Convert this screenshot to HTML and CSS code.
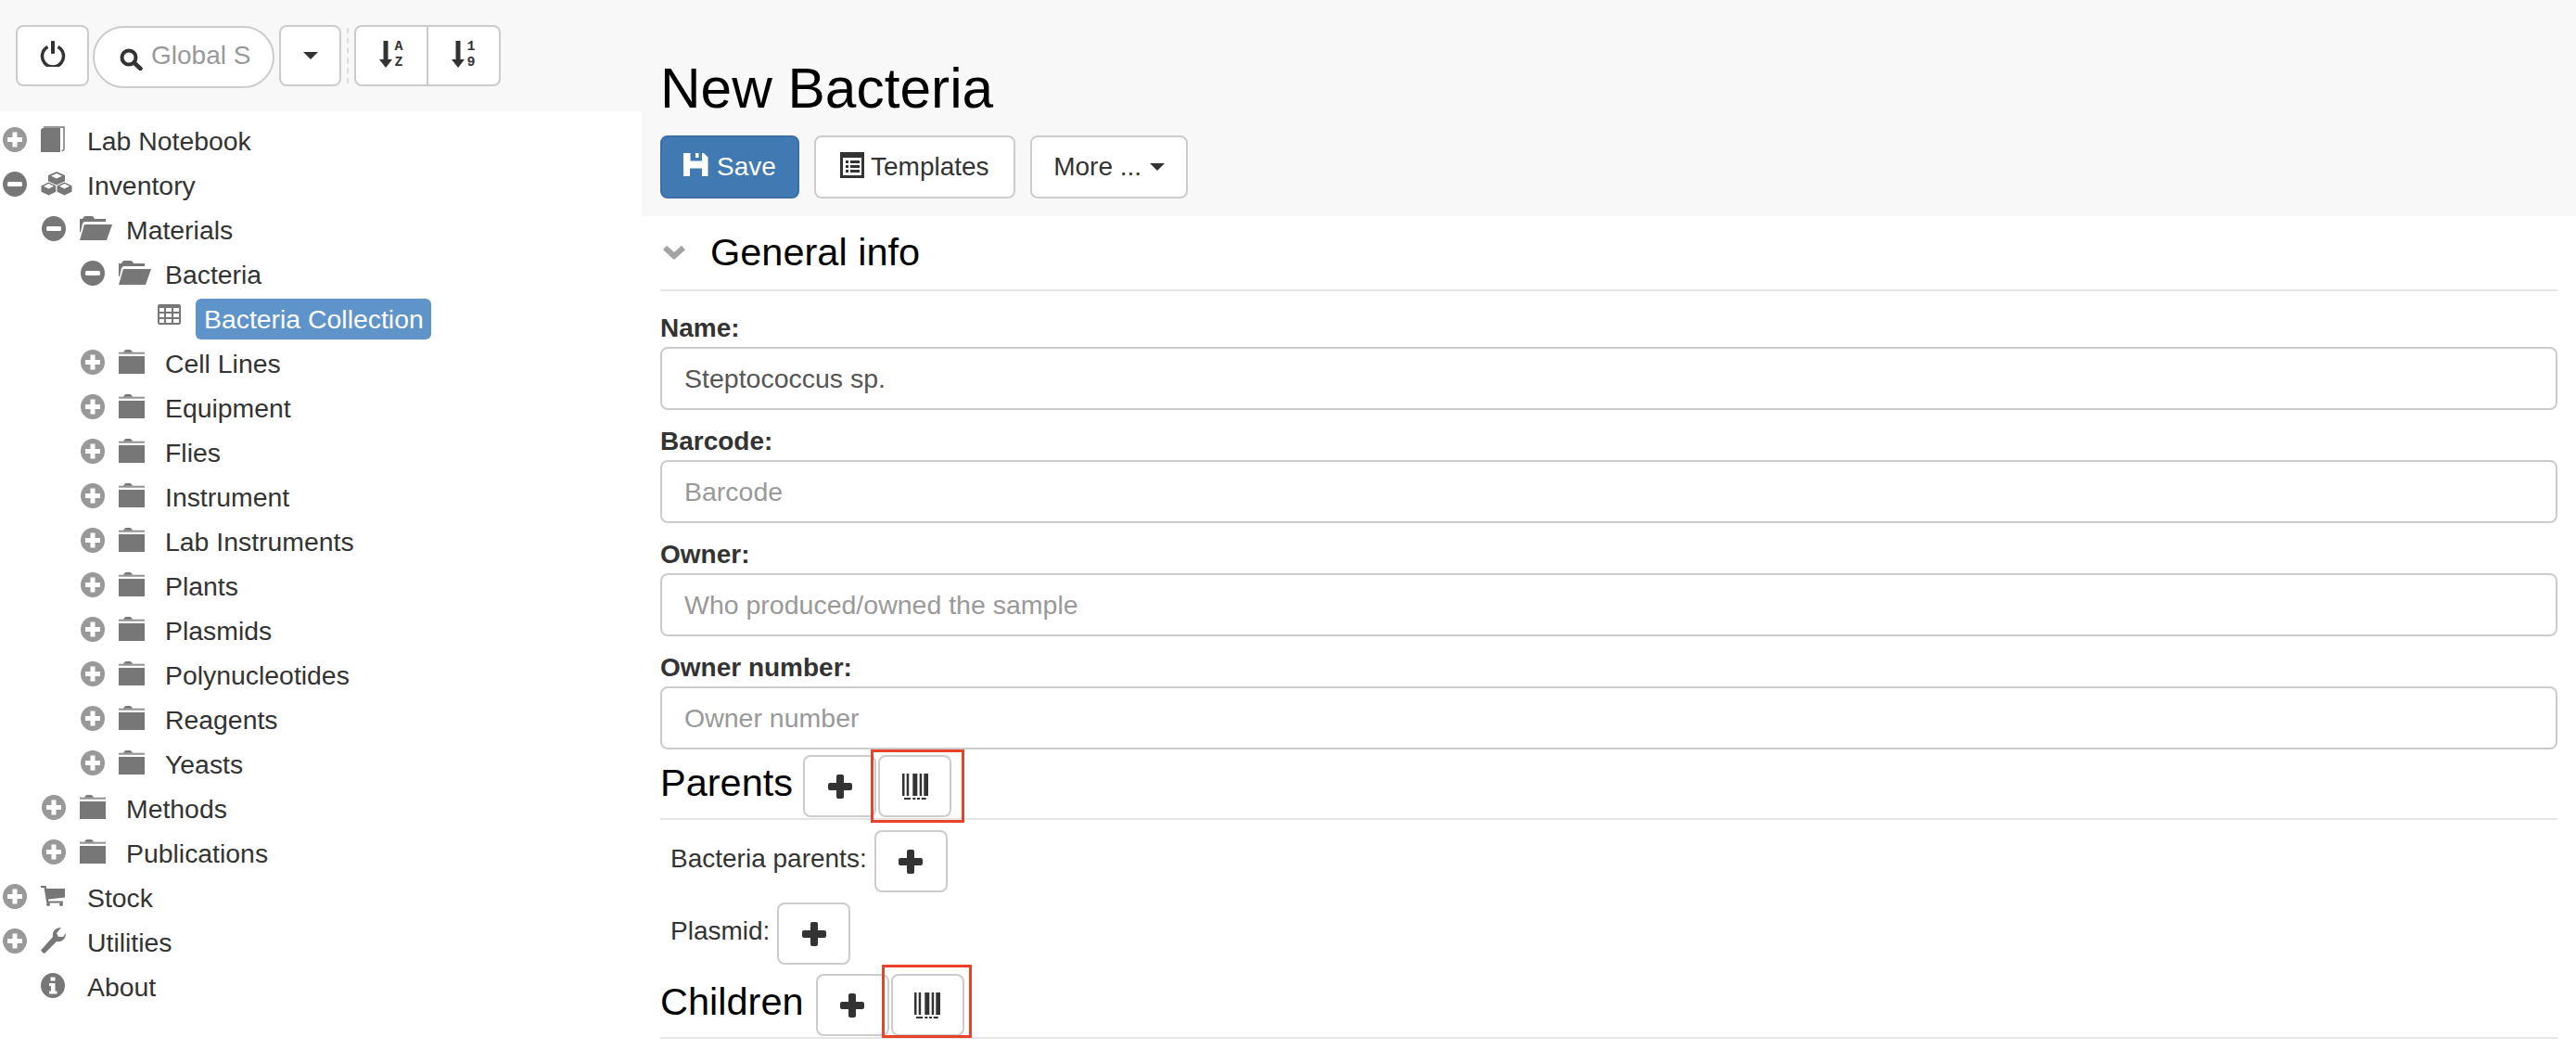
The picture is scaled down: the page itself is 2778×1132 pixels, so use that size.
FILE: index.html
```html
<!DOCTYPE html>
<html lang="en">
<head>
  <meta charset="UTF-8">
  <title>New Bacteria</title>
  <link rel="stylesheet" href="styles.css">
</head>
<body>
  <!-- icon set -->
  <svg class="sprite" xmlns="http://www.w3.org/2000/svg">
    <symbol id="i-plus-sign" viewBox="0 0 26 27">
      <ellipse cx="13" cy="13.5" rx="13" ry="13.5" fill="#999"/>
      <path d="M10.5 5.5h5v5.500h5.500v5h-5.500v5.500h-5v-5.500h-5.500v-5h5.500z" fill="#fff"/>
    </symbol>
    <symbol id="i-minus-sign" viewBox="0 0 26 27">
      <ellipse cx="13" cy="13.500" rx="13" ry="13.500" fill="#777"/>
      <rect x="5" y="11" width="16" height="5" rx="1.500" fill="#fff"/>
    </symbol>
    <symbol id="i-book" viewBox="0 0 26 28">
      <path d="M0 5Q0 2 3 2H21V28H0Z"/>
      <path d="M3 1H25V25L23 27" fill="none" stroke="currentColor" stroke-width="1.500"/>
    </symbol>
    <symbol id="i-cubes" viewBox="0 0 34 27">
      <path d="M17 0L26 4V11L17 15L8 11V4Z"/>
      <path d="M17 2L23 4.700L17 7.500L11 4.700Z" fill="#fff"/>
      <path d="M8.500 11L17 15V22L8.500 26L0 22V15Z" stroke="#fff"/>
      <path d="M8.500 13L14 15.700L8.500 18.400L3 15.700Z" fill="#fff"/>
      <path d="M25.500 11L34 15V22L25.500 26L17 22V15Z" stroke="#fff"/>
      <path d="M25.500 13L31 15.700L25.500 18.400L20 15.700Z" fill="#fff"/>
    </symbol>
    <symbol id="i-folder-close" viewBox="0 0 28 26">
      <path d="M5 2.700Q6 0 8 0H12Q14 0 15 2.700Z"/>
      <rect y="2.700" width="28" height="2" opacity=".8"/>
      <rect y="7" width="28" height="19"/>
    </symbol>
    <symbol id="i-folder-open" viewBox="0 0 35 26">
      <path d="M0 3H3Q4 0 6 0H13Q15 0 16 3H28V6H5L3 8L1 17H0Z"/>
      <path d="M5 9H35L29 26H0Z"/>
    </symbol>
    <symbol id="i-th" viewBox="0 0 25 22">
      <path d="M2 0H23Q25 0 25 2V20Q25 22 23 22H2Q0 22 0 20V2Q0 0 2 0ZM2 4V8H7V4ZM9 4V8H15V4ZM17 4V8H23V4ZM2 10V14H7V10ZM9 10V14H15V10ZM17 10V14H23V10ZM2 16V20H7V16ZM9 16V20H15V16ZM17 16V20H23V16Z" fill-rule="evenodd"/>
    </symbol>
    <symbol id="i-cart" viewBox="0 0 26 22">
      <path d="M0 0H5.500L6.200 3H26V12.500L8 14.500L8.400 16.500H24V18.500H6.300L3.500 2H0Z"/>
      <circle cx="8" cy="20" r="2"/>
      <circle cx="22" cy="20" r="2"/>
    </symbol>
    <symbol id="i-wrench" viewBox="0 0 27 28">
      <path d="M0 24.500L13 10C12 5 15 0 22 0L17 6L19 10L24 10L27 6C27 12 23 16 17 15L4 28Q2 28 0 24.500Z"/>
    </symbol>
    <symbol id="i-info" viewBox="0 0 26 27">
      <ellipse cx="13" cy="13.500" rx="13" ry="13.500"/>
      <path d="M10.500 4.500h5v4h-5zM9 11h6.500v8.500H17.500v3H9v-3h2V14H9z" fill="#fff"/>
    </symbol>
    <symbol id="i-power" viewBox="0 0 28 28">
      <path d="M8.500 6.500A11.500 11.500 0 1 0 19.500 6.500" fill="none" stroke="currentColor" stroke-width="3.500"/>
      <rect x="12" y="0" width="4" height="14" rx="1"/>
    </symbol>
    <symbol id="i-search" viewBox="0 0 25 24">
      <circle cx="10" cy="10" r="7.500" fill="none" stroke="currentColor" stroke-width="4"/>
      <path d="M15.500 15.500L22.500 22" fill="none" stroke="currentColor" stroke-width="4.500" stroke-linecap="round"/>
    </symbol>
    <symbol id="i-caret" viewBox="0 0 16 8">
      <path d="M0 0H16L8 8Z"/>
    </symbol>
    <symbol id="i-arrow" viewBox="0 0 14 29">
      <path d="M4.500 0H9.500V20H14L7 29L0 20H4.500Z"/>
    </symbol>
    <symbol id="i-floppy" viewBox="0 0 27 25">
      <path d="M0 0H7.500V8.500H20V0H22L26.500 4.500V25H0ZM7 16.500V25H20V16.500Z" fill-rule="evenodd"/>
      <rect x="13" y="0" width="3.500" height="5"/>
    </symbol>
    <symbol id="i-list" viewBox="0 0 26 28">
      <path d="M0 0H26V28H0ZM3 6V25H23V6Z" fill-rule="evenodd"/>
      <path d="M6 9h3v3H6zM11 9h10v3H11zM6 14h3v3H6zM11 14h10v3H11zM6 19h3v3H6zM11 19h10v3H11z"/>
    </symbol>
    <symbol id="i-chevron" viewBox="0 0 26 16">
      <path d="M3 3L13 12L23 3" fill="none" stroke="currentColor" stroke-width="6"/>
    </symbol>
    <symbol id="i-plus" viewBox="0 0 26 26">
      <path d="M9 2Q9 0 11 0H15Q17 0 17 2V9H24Q26 9 26 11V15Q26 17 24 17H17V24Q17 26 15 26H11Q9 26 9 24V17H2Q0 17 0 15V11Q0 9 2 9H9Z"/>
    </symbol>
    <symbol id="i-barcode" viewBox="0 0 28 28">
      <path d="M0 0h2.500v24H0zM4.700 0h2.500v24H4.700zM11.300 0h5v24h-5zM18.700 0h2.500v24h-2.500zM23.300 0h4.700v24h-4.700zM2 26h7v2H2zM11.300 26h3v2h-3zM16 26h3v2h-3zM20.700 26h5v2h-5z"/>
    </symbol>
  </svg>

  <div class="page">
    <aside class="sidebar">
      <div class="toolbar">
        <button class="btn btn-power"><svg class="ic ic-power"><use href="#i-power"/></svg></button>
        <div class="search">
          <svg class="ic ic-search"><use href="#i-search"/></svg>
          <span class="search-hint">Global S</span>
        </div>
        <button class="btn btn-drop"><svg class="ic ic-caret"><use href="#i-caret"/></svg></button>
        <span class="tool-sep"></span>
        <div class="btn-group">
          <button class="btn btn-sort">
            <svg class="ic ic-arrow"><use href="#i-arrow"/></svg>
            <span class="sort-chars"><span>A</span><span>Z</span></span>
          </button>
          <button class="btn btn-sort">
            <svg class="ic ic-arrow"><use href="#i-arrow"/></svg>
            <span class="sort-chars"><span>1</span><span>9</span></span>
          </button>
        </div>
      </div>

      <ul class="tree">
        <li class="node lvl-0"><svg class="exp"><use href="#i-plus-sign"/></svg><span class="node-ico"><svg class="ic ic-book"><use href="#i-book"/></svg></span><span>Lab Notebook</span></li>
        <li class="node lvl-0"><svg class="exp"><use href="#i-minus-sign"/></svg><span class="node-ico"><svg class="ic ic-cubes"><use href="#i-cubes"/></svg></span><span>Inventory</span></li>
        <li class="node lvl-1"><svg class="exp"><use href="#i-minus-sign"/></svg><span class="node-ico"><svg class="ic ic-open"><use href="#i-folder-open"/></svg></span><span>Materials</span></li>
        <li class="node lvl-2"><svg class="exp"><use href="#i-minus-sign"/></svg><span class="node-ico"><svg class="ic ic-open"><use href="#i-folder-open"/></svg></span><span>Bacteria</span></li>
        <li class="node lvl-3"><span class="exp"></span><span class="node-ico"><svg class="ic ic-th"><use href="#i-th"/></svg></span><span class="selected">Bacteria Collection</span></li>
        <li class="node lvl-2"><svg class="exp"><use href="#i-plus-sign"/></svg><span class="node-ico"><svg class="ic ic-folder"><use href="#i-folder-close"/></svg></span><span>Cell Lines</span></li>
        <li class="node lvl-2"><svg class="exp"><use href="#i-plus-sign"/></svg><span class="node-ico"><svg class="ic ic-folder"><use href="#i-folder-close"/></svg></span><span>Equipment</span></li>
        <li class="node lvl-2"><svg class="exp"><use href="#i-plus-sign"/></svg><span class="node-ico"><svg class="ic ic-folder"><use href="#i-folder-close"/></svg></span><span>Flies</span></li>
        <li class="node lvl-2"><svg class="exp"><use href="#i-plus-sign"/></svg><span class="node-ico"><svg class="ic ic-folder"><use href="#i-folder-close"/></svg></span><span>Instrument</span></li>
        <li class="node lvl-2"><svg class="exp"><use href="#i-plus-sign"/></svg><span class="node-ico"><svg class="ic ic-folder"><use href="#i-folder-close"/></svg></span><span>Lab Instruments</span></li>
        <li class="node lvl-2"><svg class="exp"><use href="#i-plus-sign"/></svg><span class="node-ico"><svg class="ic ic-folder"><use href="#i-folder-close"/></svg></span><span>Plants</span></li>
        <li class="node lvl-2"><svg class="exp"><use href="#i-plus-sign"/></svg><span class="node-ico"><svg class="ic ic-folder"><use href="#i-folder-close"/></svg></span><span>Plasmids</span></li>
        <li class="node lvl-2"><svg class="exp"><use href="#i-plus-sign"/></svg><span class="node-ico"><svg class="ic ic-folder"><use href="#i-folder-close"/></svg></span><span>Polynucleotides</span></li>
        <li class="node lvl-2"><svg class="exp"><use href="#i-plus-sign"/></svg><span class="node-ico"><svg class="ic ic-folder"><use href="#i-folder-close"/></svg></span><span>Reagents</span></li>
        <li class="node lvl-2"><svg class="exp"><use href="#i-plus-sign"/></svg><span class="node-ico"><svg class="ic ic-folder"><use href="#i-folder-close"/></svg></span><span>Yeasts</span></li>
        <li class="node lvl-1"><svg class="exp"><use href="#i-plus-sign"/></svg><span class="node-ico"><svg class="ic ic-folder"><use href="#i-folder-close"/></svg></span><span>Methods</span></li>
        <li class="node lvl-1"><svg class="exp"><use href="#i-plus-sign"/></svg><span class="node-ico"><svg class="ic ic-folder"><use href="#i-folder-close"/></svg></span><span>Publications</span></li>
        <li class="node lvl-0"><svg class="exp"><use href="#i-plus-sign"/></svg><span class="node-ico"><svg class="ic ic-cart"><use href="#i-cart"/></svg></span><span>Stock</span></li>
        <li class="node lvl-0"><svg class="exp"><use href="#i-plus-sign"/></svg><span class="node-ico"><svg class="ic ic-wrench"><use href="#i-wrench"/></svg></span><span>Utilities</span></li>
        <li class="node lvl-0"><span class="exp"></span><span class="node-ico"><svg class="ic ic-info"><use href="#i-info"/></svg></span><span>About</span></li>
      </ul>
    </aside>

    <main class="main">
      <header class="main-head">
        <h2>New Bacteria</h2>
        <div class="actions">
          <button class="btn btn-save"><svg class="ic ic-floppy"><use href="#i-floppy"/></svg>Save</button>
          <button class="btn btn-text"><svg class="ic ic-list"><use href="#i-list"/></svg>Templates</button>
          <button class="btn btn-more">More ...<svg class="ic ic-caret ic-caret-more"><use href="#i-caret"/></svg></button>
        </div>
      </header>

      <div class="content">
        <div class="legend">
          <svg class="ic ic-chevron"><use href="#i-chevron"/></svg>
          <h3>General info</h3>
        </div>

        <div class="field"><label for="f-name">Name:</label><input id="f-name" type="text" value="Steptococcus sp."></div>
        <div class="field"><label for="f-barcode">Barcode:</label><input id="f-barcode" type="text" placeholder="Barcode"></div>
        <div class="field"><label for="f-owner">Owner:</label><input id="f-owner" type="text" placeholder="Who produced/owned the sample"></div>
        <div class="field"><label for="f-number">Owner number:</label><input id="f-number" type="text" placeholder="Owner number"></div>

        <div class="rel-head rel-parents">
          <h3>Parents</h3>
          <button class="btn btn-square"><svg class="ic ic-plus"><use href="#i-plus"/></svg></button>
          <button class="btn btn-square mark mark-parents"><svg class="ic ic-barcode"><use href="#i-barcode"/></svg></button>
        </div>
        <div class="rel-row">
          <span class="rel-label">Bacteria parents:</span>
          <button class="btn btn-square"><svg class="ic ic-plus"><use href="#i-plus"/></svg></button>
        </div>
        <div class="rel-row">
          <span class="rel-label">Plasmid:</span>
          <button class="btn btn-square"><svg class="ic ic-plus"><use href="#i-plus"/></svg></button>
        </div>
        <div class="rel-head rel-children">
          <h3>Children</h3>
          <button class="btn btn-square"><svg class="ic ic-plus"><use href="#i-plus"/></svg></button>
          <button class="btn btn-square mark mark-children"><svg class="ic ic-barcode"><use href="#i-barcode"/></svg></button>
        </div>
      </div>
    </main>
  </div>
</body>
</html>
```

FILE: styles.css
```css
* {
  box-sizing: border-box;
}

body {
  margin: 0;
  background: #fff;
  font-family: "Liberation Sans", Arial, sans-serif;
  font-size: 28px;
  color: #333;
}

.sprite {
  display: none;
}

.page {
  display: flex;
  align-items: flex-start;
}

.ic {
  display: block;
  flex: none;
  fill: currentColor;
}

/* buttons */
.btn {
  display: flex;
  align-items: center;
  justify-content: center;
  height: 68px;
  padding: 0;
  background: #fff;
  border: 2px solid #ccc;
  border-radius: 8px;
  font-family: inherit;
  font-size: 28px;
  color: #333;
}

.btn-text {
  padding: 0 26px;
}

.btn-more {
  width: 170px;
  padding: 0 0 0 1px;
}

.btn-save {
  width: 150px;
  background: #4179b3;
  border-color: #3a6fa6;
  color: #fff;
}

.btn-square {
  width: 79px;
  height: 67px;
}

/* left column */
.sidebar {
  flex: none;
  width: 692px;
}

.toolbar {
  display: flex;
  align-items: flex-start;
  height: 120px;
  padding: 27px 0 0 17px;
  background: #f8f8f8;
}

.toolbar .btn {
  height: 66px;
}

.btn-power {
  width: 79px;
}

.ic-power {
  width: 28px;
  height: 28px;
  margin-top: -4px;
}

.search {
  display: flex;
  align-items: center;
  width: 196px;
  height: 67px;
  margin: 1px 0 0 4px;
  padding: 0 0 4px 27px;
  background: #fff;
  border: 2px solid #ccc;
  border-radius: 34px;
}

.ic-search {
  width: 25px;
  height: 24px;
  margin: 8px 9px 0 0;
}

.search-hint {
  color: #999;
}

.btn-drop {
  width: 67px;
  margin-left: 5px;
}

.ic-caret {
  width: 16px;
  height: 8px;
}

.tool-sep {
  width: 2px;
  height: 60px;
  margin: 3px 6px 0;
  border-left: 2px dashed #ddd;
}

.btn-group {
  display: flex;
}

.btn-sort {
  width: 80px;
  margin-left: -2px;
  border-radius: 0;
}

.btn-sort:first-child {
  margin-left: 0;
  border-radius: 8px 0 0 8px;
}

.btn-sort:last-child {
  border-radius: 0 8px 8px 0;
}

.ic-arrow {
  width: 14px;
  height: 29px;
  margin-top: -4px;
}

.sort-chars {
  display: flex;
  flex-direction: column;
  margin: -3px 0 0 2px;
  font-family: "Liberation Mono", monospace;
  font-size: 15px;
  font-weight: 700;
  line-height: 17px;
}

.tree {
  margin: 0;
  padding: 8px 0 0;
  list-style: none;
  font-size: 28.4px;
}

.node {
  display: flex;
  align-items: center;
  height: 48px;
}

.lvl-0 {
  padding-left: 3px;
}

.lvl-1 {
  padding-left: 45px;
}

.lvl-2 {
  padding-left: 87px;
}

.lvl-3 {
  padding-left: 129px;
}

.exp {
  flex: none;
  width: 26px;
  height: 27px;
  margin: 0 15px 4px 0;
}

.node-ico {
  flex: none;
  width: 50px;
  margin-bottom: 4px;
  color: #777;
}

.ic-book { width: 26px; height: 28px; }
.ic-cubes { width: 34px; height: 27px; }
.ic-folder { width: 28px; height: 26px; }
.ic-open { width: 35px; height: 26px; }
.ic-th { width: 25px; height: 22px; margin-bottom: 6px; }
.ic-cart { width: 26px; height: 22px; }
.ic-wrench { width: 27px; height: 28px; }
.ic-info { width: 26px; height: 27px; }

.selected {
  margin-left: -9px;
  padding: 0 8px 0 9px;
  line-height: 44px;
  background: #5e94c9;
  border-radius: 6px;
  color: #fff;
}

/* main column */
.main {
  flex: 1;
  min-width: 0;
}

.main-head {
  height: 233px;
  padding: 62px 0 0 20px;
  background: #f8f8f8;
}

h2 {
  margin: 0;
  font-size: 60.400px;
  font-weight: 400;
  line-height: 66px;
  color: #000;
}

.actions {
  display: flex;
  gap: 16px;
  margin-top: 18px;
}

.ic-floppy {
  width: 27px;
  height: 25px;
  margin: -6px 9px 0 0;
}

.ic-list {
  width: 26px;
  height: 28px;
  margin: -4px 7px 0 0;
}

.ic-caret-more {
  margin-left: 9px;
}

.content {
  padding: 0 20px;
}

h3 {
  margin: 0;
  font-size: 41.500px;
  font-weight: 400;
  line-height: 46px;
  color: #000;
}

.legend {
  display: flex;
  align-items: center;
  padding: 16px 0 17px;
  border-bottom: 2px solid #e5e5e5;
}

.ic-chevron {
  width: 26px;
  height: 16px;
  margin: 0 26px 0 2px;
  color: #a3a3a3;
}

.field {
  margin-top: 14px;
}

.legend + .field {
  margin-top: 20px;
}

.field label {
  display: block;
  font-weight: 700;
  line-height: 40px;
}

.field input {
  display: block;
  width: 100%;
  height: 68px;
  padding: 0 24px;
  border: 2px solid #ccc;
  border-radius: 8px;
  font-family: inherit;
  font-size: 28.500px;
  color: #555;
}

.field input::placeholder {
  color: #999;
}

.rel-head {
  display: flex;
  align-items: center;
  padding-bottom: 1px;
  border-bottom: 2px solid #e5e5e5;
}

.rel-head h3 {
  margin: 0 11px 8px 0;
}

.rel-head .btn + .btn {
  margin-left: 2px;
}

.rel-parents {
  margin-top: 6px;
}

.rel-children {
  margin-top: 10px;
}

.rel-children h3 {
  margin-right: 13px;
}

.rel-row {
  display: flex;
  align-items: center;
  margin-top: 11px;
  padding-left: 11px;
}

.rel-label {
  margin: 0 8px 6px 0;
  line-height: 40px;
}

/* red marks over the barcode buttons */
.mark {
  position: relative;
}

.mark::after {
  content: "";
  position: absolute;
  border: 3px solid #e8432a;
}

.mark-parents::after {
  top: -8px;
  right: -16px;
  bottom: -8px;
  left: -10px;
}

.mark-children::after {
  top: -12px;
  right: -10px;
  bottom: -4px;
  left: -12px;
}

.ic-plus {
  width: 26px;
  height: 26px;
}

.ic-barcode {
  width: 28px;
  height: 28px;
}
```
